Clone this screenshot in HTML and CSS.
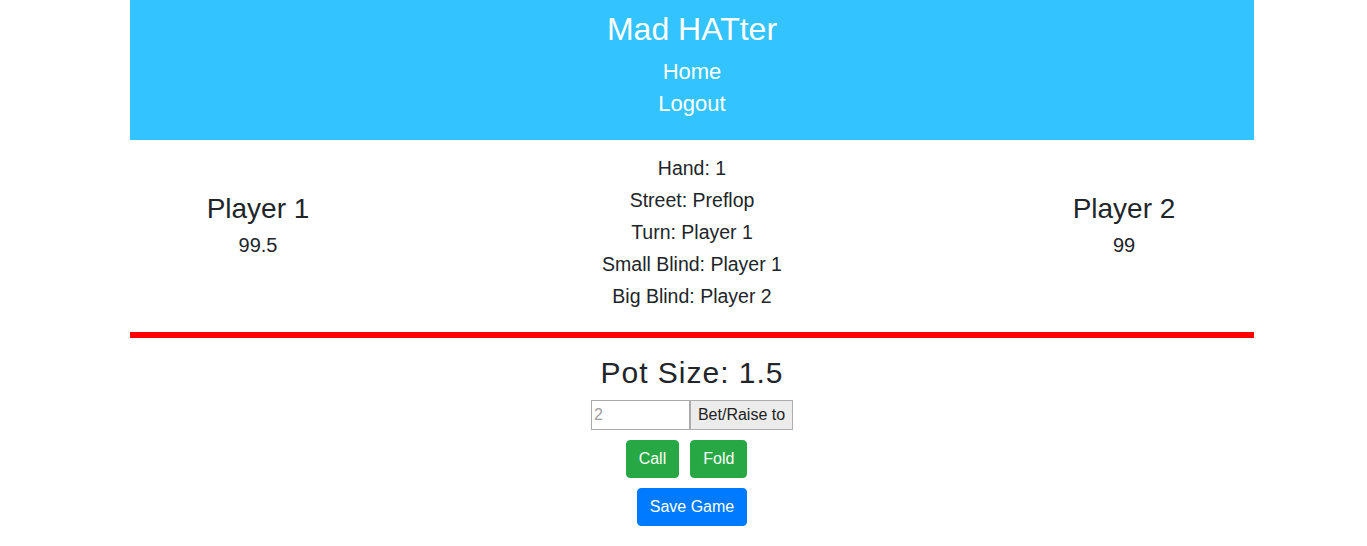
FILE: index.html
```html
<!DOCTYPE html>
<html lang="en">
<head>
<meta charset="utf-8">
<title>Mad HATter</title>
<link rel="stylesheet" href="styles.css">
</head>
<body>
<div class="page">
  <header class="site-header">
    <h1 class="brand">Mad HATter</h1>
    <nav class="nav">
      <a class="nav-link" href="#">Home</a>
      <a class="nav-link" href="#">Logout</a>
    </nav>
  </header>

  <section class="table">
    <div class="player player-left">
      <h3 class="player-name">Player 1</h3>
      <div class="player-stack">99.5</div>
    </div>
    <div class="info">
      <div class="info-line">Hand: 1</div>
      <div class="info-line">Street: Preflop</div>
      <div class="info-line">Turn: Player 1</div>
      <div class="info-line">Small Blind: Player 1</div>
      <div class="info-line">Big Blind: Player 2</div>
    </div>
    <div class="player player-right">
      <h3 class="player-name">Player 2</h3>
      <div class="player-stack">99</div>
    </div>
  </section>

  <div class="divider"></div>

  <section class="actions">
    <h2 class="pot">Pot Size: 1.5</h2>
    <form class="bet-row">
      <input class="bet-input" type="text" placeholder="2">
      <button class="bet-button" type="button">Bet/Raise to</button>
    </form>
    <div class="btn-row btn-row-pair">
      <button class="btn btn-green" type="button">Call</button>
      <button class="btn btn-green" type="button">Fold</button>
    </div>
    <div class="btn-row">
      <button class="btn btn-blue" type="button">Save Game</button>
    </div>
  </section>
</div>
</body>
</html>
```

FILE: styles.css
```css
* {
  box-sizing: border-box;
}

body {
  margin: 0;
  font-family: "Liberation Sans", Arial, sans-serif;
  color: #212529;
  background: #ffffff;
}

.page {
  margin-left: 130px;
  width: 1124px;
}

.site-header {
  background: #33c3ff;
  color: #ffffff;
  text-align: center;
  height: 140px;
  padding-top: 10px;
}

.brand {
  margin: 0;
  font-size: 32px;
  font-weight: normal;
  line-height: 38px;
}

.nav {
  display: flex;
  flex-direction: column;
  align-items: center;
  margin-top: 8px;
}

.nav-link {
  color: #ffffff;
  text-decoration: none;
  font-size: 22px;
  line-height: 32px;
}

.table {
  display: grid;
  grid-template-columns: 256px 1fr 256px;
  padding-top: 12px;
  text-align: center;
}

.player {
  padding-top: 40px;
}

.player-right {
  padding-right: 4px;
}

.player-name {
  margin: 0 0 4px;
  font-size: 28px;
  font-weight: normal;
  line-height: 34px;
}

.player-stack {
  font-size: 20px;
  line-height: 30px;
}

.info-line {
  font-size: 19.5px;
  line-height: 32px;
}

.divider {
  height: 6px;
  background: #ff0000;
  margin-top: 20px;
}

.actions {
  display: flex;
  flex-direction: column;
  align-items: center;
  padding-top: 17px;
}

.pot {
  margin: 0;
  font-size: 30px;
  font-weight: normal;
  letter-spacing: 1px;
  line-height: 36px;
}

.bet-row {
  display: flex;
  margin: 9px 0 0;
  height: 30px;
}

.bet-input {
  width: 99px;
  height: 30px;
  border: 1px solid #a9a9a9;
  padding: 0 2px;
  font-family: "Liberation Sans", Arial, sans-serif;
  font-size: 16px;
  color: #212529;
}

.bet-input::placeholder {
  color: #a0a0a0;
}

.bet-button {
  height: 30px;
  padding: 0 7px;
  border: 1px solid #adadad;
  background: #ececec;
  font-family: "Liberation Sans", Arial, sans-serif;
  font-size: 16px;
  color: #222222;
}

.btn-row {
  display: flex;
  justify-content: center;
  margin-top: 10px;
}

.btn-row-pair .btn {
  margin-right: 11px;
}

.btn {
  font-family: "Liberation Sans", Arial, sans-serif;
  font-size: 16px;
  line-height: 24px;
  padding: 6px 12px;
  border: 1px solid transparent;
  border-radius: 4px;
  color: #ffffff;
}

.btn-green {
  background: #28a745;
  border-color: #28a745;
}

.btn-blue {
  background: #007bff;
  border-color: #007bff;
}
```
